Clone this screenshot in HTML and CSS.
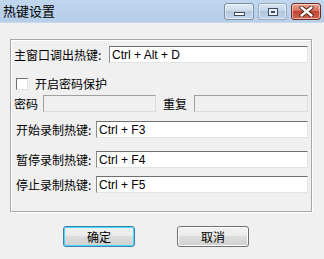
FILE: index.html
```html
<!DOCTYPE html>
<html lang="zh-CN">
<head>
  <meta charset="UTF-8" />
  <title>热键设置</title>
  <link rel="stylesheet" href="styles.css">
</head>
<body>
  <div class="window">
    <header class="titlebar">
      <span class="title">热键设置</span>
      <div class="caption-buttons">
        <span class="cap cap-min"><i></i></span>
        <span class="cap cap-max"><i></i></span>
        <span class="cap cap-close">
          <svg width="15" height="11" viewBox="0 0 15 11">
            <path d="M2.5 1.5 L12.5 9.5 M12.5 1.5 L2.5 9.5" stroke="#4a1a14" stroke-width="4.2" stroke-linecap="round"/>
            <path d="M2.5 1.5 L12.5 9.5 M12.5 1.5 L2.5 9.5" stroke="#fff" stroke-width="2.4" stroke-linecap="round"/>
          </svg>
        </span>
      </div>
    </header>

    <main class="content">
      <section class="group">
        <div class="row row-main">
          <label class="label label-wide">主窗口调出热键:</label>
          <input type="text" class="field" value="Ctrl + Alt + D">
        </div>
        <div class="row row-check">
          <span class="checkbox"></span>
          <span class="check-text">开启密码保护</span>
        </div>
        <div class="row row-pass">
          <label class="label label-short">密码</label>
          <input type="text" class="field field-disabled field-pass" disabled>
          <label class="label label-repeat">重复</label>
          <input type="text" class="field field-disabled" disabled>
        </div>
        <div class="row row-start">
          <label class="label">开始录制热键:</label>
          <input type="text" class="field" value="Ctrl + F3">
        </div>
        <div class="row row-pause">
          <label class="label">暂停录制热键:</label>
          <input type="text" class="field" value="Ctrl + F4">
        </div>
        <div class="row row-stop">
          <label class="label">停止录制热键:</label>
          <input type="text" class="field" value="Ctrl + F5">
        </div>
      </section>

      <div class="actions">
        <button class="btn btn-default">确定</button>
        <button class="btn">取消</button>
      </div>
    </main>
  </div>
</body>
</html>
```

FILE: styles.css
```css
* {
  box-sizing: border-box;
  margin: 0;
  padding: 0;
}

body {
  width: 324px;
  height: 259px;
  overflow: hidden;
  background: #f0f0f0;
  font-family: "Noto Sans CJK SC", "Liberation Sans", sans-serif;
  font-size: 12px;
  color: #000;
}

.titlebar {
  height: 23px;
  display: flex;
  align-items: flex-start;
  justify-content: space-between;
  background: linear-gradient(to bottom, #c0d6ee, #b6cee9);
  border-bottom: 1px solid #c9d9ec;
}

.title {
  font-size: 13px;
  font-weight: 400;
  line-height: 22px;
  padding-left: 3px;
  color: #000;
}

.caption-buttons {
  display: flex;
  gap: 4px;
  padding: 3px 3px 0 0;
}

.cap {
  width: 30px;
  height: 17px;
  border: 1px solid #7d8da3;
  border-radius: 3px;
  display: flex;
  align-items: center;
  justify-content: center;
  background: linear-gradient(to bottom, #e3ecf6 0%, #cbdaea 45%, #b4c8df 50%, #c6d8eb 100%);
  box-shadow: inset 0 0 0 1px rgba(255, 255, 255, 0.5);
}

.cap-max {
  width: 29px;
  background: linear-gradient(to bottom, #d8e4f1 0%, #c4d5e8 45%, #b0c5dd 50%, #c0d3e8 100%);
  border-color: #9aabc0;
}

.cap-min i {
  display: block;
  width: 11px;
  height: 4px;
  margin-top: 5px;
  background: #fff;
  border: 1px solid #3b4a5e;
}

.cap-max i {
  display: block;
  width: 10px;
  height: 8px;
  border: 1px solid #3b4a5e;
  box-shadow: inset 0 0 0 2px #e8eef5;
  background: #3b4a5e;
}

.cap-close {
  background: linear-gradient(to bottom, #e8a595 0%, #d66f5c 45%, #c24331 50%, #d2664f 100%);
  border-color: #6b2b22;
}

.content {
  padding: 16px 12px 0 10px;
}

.group {
  height: 173px;
  border: 1px solid #a7a7a7;
  box-shadow: inset 1px 1px 0 #fff, 1px 1px 0 #fff;
  padding: 6px 3px 0 3px;
}

.row {
  display: flex;
  align-items: center;
  height: 17px;
}

.row-check {
  height: 14px;
  margin-top: 14px;
  padding-left: 2px;
}

.row-pass {
  margin-top: 4px;
}

.row-start {
  margin-top: 9px;
  padding-left: 2px;
}

.row-pause {
  margin-top: 13px;
  padding-left: 2px;
}

.row-stop {
  margin-top: 8px;
  padding-left: 2px;
}

.label {
  width: 80px;
  flex-shrink: 0;
  white-space: nowrap;
  line-height: 17px;
}

.label-wide {
  width: 95px;
}

.label-short {
  width: 29px;
}

.label-repeat {
  width: 38px;
  padding-left: 7px;
}

.field {
  flex: 1;
  width: 0;
  min-width: 0;
  height: 17px;
  border: 1px solid;
  border-color: #6f6f6f #e3e3e3 #e3e3e3 #8a8a8a;
  background: #fff;
  font-family: "Liberation Sans", Arial, sans-serif;
  font-size: 12px;
  padding: 0 2px;
  color: #000;
  outline: none;
}

.field-disabled {
  background: #f0f0f0;
  border-color: #a0a0a0 #dcdcdc #dcdcdc #a0a0a0;
}

.field-pass {
  flex: none;
  width: 113px;
}

.checkbox {
  width: 12px;
  height: 12px;
  border: 1px solid #6f6f6f;
  border-right-color: #e0e0e0;
  border-bottom-color: #e0e0e0;
  background: #fff;
  margin-right: 7px;
}

.check-text {
  line-height: 14px;
}

.actions {
  display: flex;
  gap: 42px;
  padding: 14px 0 0 53px;
}

.btn {
  width: 72px;
  height: 21px;
  border: 1px solid #707070;
  border-radius: 3px;
  background: linear-gradient(to bottom, #f2f2f2 0%, #ebebeb 45%, #dddddd 50%, #cfcfcf 100%);
  box-shadow: inset 0 0 0 1px #fcfcfc;
  font-family: "Noto Sans CJK SC", sans-serif;
  font-size: 12px;
  color: #000;
}

.btn-default {
  border-color: #3c7fb1;
  box-shadow: inset 0 0 0 1px #48d8fb;
}
```
